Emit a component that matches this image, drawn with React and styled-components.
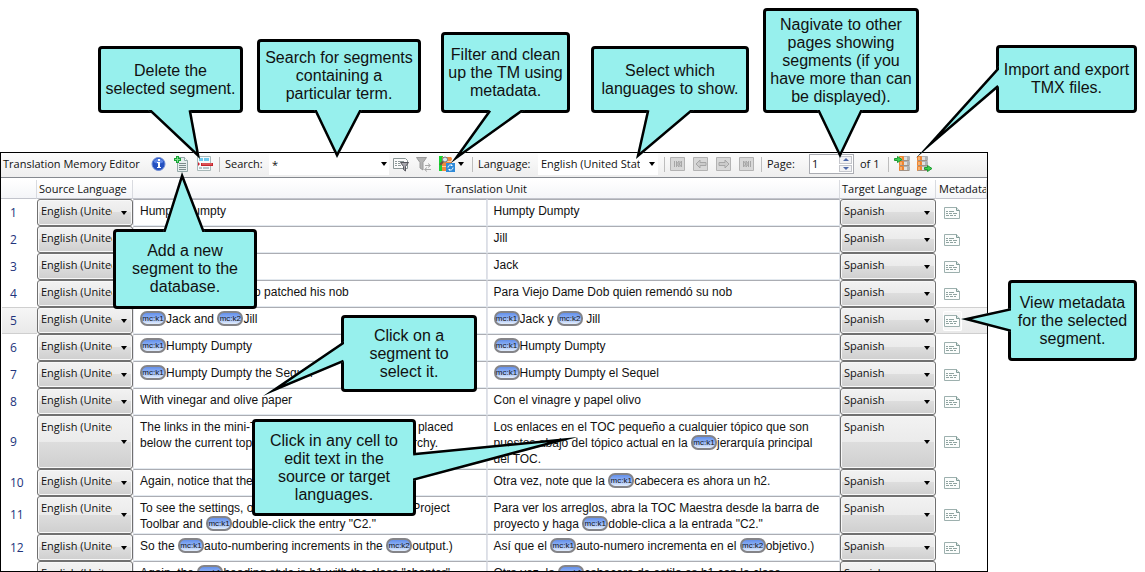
import React, { useId } from "react";
import styled, { createGlobalStyle, css } from "styled-components";

const uiFont = '"Open Sans", "Noto Sans", sans-serif';
const textFont = '"Liberation Sans", Arial, sans-serif';

const GlobalStyle = createGlobalStyle`
  *, *::before, *::after { box-sizing: border-box; }
  body { margin: 0; background: #fff; color: #111; font: 11px/16px ${uiFont}; }
  button, input, select { font: inherit; color: inherit; margin: 0; padding: 0; border: 0; background: none; border-radius: 0; }
`;

const Figure = styled.main`
  position: relative;
  display: flex;
  flex-direction: column;
  height: 100vh;
  padding: 152px 157px 0 0;
  overflow: hidden;
`;

const Editor = styled.section`
  flex: 1;
  min-height: 0;
  overflow: hidden;
  border: 1px solid #000;
  background: #fff;
`;

/* ---------- toolbar ---------- */

const Toolbar = styled.div`
  display: flex;
  align-items: center;
  height: 25px;
  padding: 0 0 2px 2px;
  border-bottom: 1px solid #85898f;
  background: linear-gradient(#fcfcfc, #eeeeee);
  white-space: nowrap;
`;

const Title = styled.h1`
  flex: 0 0 148px;
  margin: 0;
  font: inherit;
`;

const ToolLabel = styled.label`
  flex: 0 0 ${(p) => p.$width}px;
`;

const ToolGroup = styled.div`
  display: flex;
  align-items: center;
  gap: 7px;
  margin-left: ${(p) => p.$before || 0}px;
`;

const ToolButton = styled.button`
  display: block;
  width: 16px;
  height: 16px;
  svg { display: block; overflow: visible; }
`;

const ArrowButton = styled.button`
  display: grid;
  place-items: center;
  width: 11px;
  height: 22px;
`;

const Separator = styled.span`
  flex: none;
  width: 1px;
  height: 15px;
  margin: 0 5px 0 6px;
  background: #bdbdbd;
`;

const arrow = css`
  content: "";
  width: 0;
  height: 0;
  border: solid transparent;
  border-width: 4px 3px 0;
  border-top-color: #000;
`;

const Arrow = styled.span`
  display: block;
  ${arrow}
`;

const Combo = styled.div`
  display: flex;
  align-items: center;
  flex: none;
  width: 120px;
  height: 22px;
  padding-left: 3px;
  background: #fff;
`;

const ComboInput = styled.input`
  flex: 1;
  min-width: 0;
  height: 22px;
  outline: 0;
`;

const ComboSelect = styled.select`
  appearance: none;
  flex: 0 0 99px;
  width: 99px;
  height: 22px;
  margin-right: 6px;
  outline: 0;
  overflow: hidden;
`;

const Spinner = styled.div`
  display: flex;
  flex: none;
  width: 45px;
  height: 20px;
  padding: 1px;
  border: 1px solid #abadb3;
  background: #fff;
`;

const SpinnerInput = styled.input`
  flex: 1;
  min-width: 0;
  padding-left: 1px;
  outline: 0;
`;

const SpinnerButtons = styled.div`
  display: grid;
  gap: 1px;
  width: 13px;
`;

const SpinnerButton = styled.button`
  display: grid;
  place-items: center;
  border: 1px solid #c3c5cb;
  background: #f2f2f4;
  svg { display: block; }
`;

const PageCount = styled.span`
  flex: 0 0 22px;
  margin-left: 6px;
`;

/* ---------- segment table ---------- */

const Table = styled.table`
  display: block;
  padding-top: 2px;
  background: #fff;
`;

const Section = styled.thead`
  display: block;
`;

const Body = styled.tbody`
  display: block;
`;

const Row = styled.tr`
  display: grid;
  grid-template-columns: 36px 96px 1fr 1fr 96px 51px;
  min-height: ${(p) => (p.$head ? 19 : 27)}px;
`;

const Head = styled.th`
  grid-column: span ${(p) => p.$span || 1};
  padding: 1px 0 0 ${(p) => p.$indent || 0}px;
  border: solid #d9dbe0;
  border-width: 0 1px 1px 0;
  border-bottom-color: #c2c4cc;
  background: linear-gradient(#ffffff, #f4f5f8);
  overflow: hidden;
  font-weight: 400;
  text-align: ${(p) => (p.$span ? "center" : "left")};
  white-space: nowrap;
`;

const selectedFill = css`
  border: solid #cfcfcf;
  border-width: 1px 0;
  background: linear-gradient(#f6f6f6, #e9e9e9);
`;

const RowNumber = styled.th`
  display: flex;
  align-items: center;
  margin-left: 1px;
  padding: 0 0 0 8px;
  font-size: 12px;
  font-weight: 400;
  color: #22347c;
  ${(p) => p.$selected && selectedFill}
`;

const Cell = styled.td`
  display: grid;
  min-width: 0;
  padding: 0;
`;

const MetaCell = styled.td`
  display: flex;
  align-items: center;
  padding: 0 0 0 7px;
  ${(p) => p.$selected && selectedFill}
`;

const MetaButton = styled.button`
  width: 19px;
  height: 20px;
  padding: 0 1px;
  border-radius: 2px;
  ${(p) => p.$selected && css`background: #f6f6f6; box-shadow: inset 0 0 0 1px #fff;`}
  svg { display: block; }
`;

const LanguageBox = styled.label`
  display: flex;
  justify-content: space-between;
  align-items: flex-start;
  padding: 0 5px 0 3px;
  border: 1px solid #707070;
  border-radius: 3px;
  background: linear-gradient(#f2f2f2, #ebebeb 49%, #dddddd 50%, #cfcfcf);
  box-shadow: inset 0 0 0 1px #f8f8f8;
  &::after { ${arrow} align-self: center; }
`;

const LanguageSelect = styled.select`
  appearance: none;
  width: 71px;
  height: 22px;
  line-height: 16px;
  outline: 0;
`;

const Segment = styled.div`
  min-width: 0;
  padding: 3px 15px 1px 6px;
  border: 1px solid;
  border-color: #abadb3 #dbdfe6 #e3e9ef #e2e3ea;
  background: #fff;
  font: 12px/16px ${textFont};
  outline: 0;
`;

const Chip = styled.span`
  display: inline-block;
  width: 26px;
  height: 15px;
  border: 2px solid #848488;
  border-radius: 7px;
  background: linear-gradient(#6490ea, #8fb2f6 45%, #e4eefc);
  font-size: 8px;
  line-height: 11px;
  text-align: center;
  vertical-align: top;
`;

/* ---------- callouts ---------- */

const Note = styled.aside`
  position: absolute;
  left: ${(p) => p.$x}px;
  top: ${(p) => p.$y}px;
  width: ${(p) => p.$w}px;
  height: ${(p) => p.$h}px;
  display: grid;
  place-items: center;
  border: 3px solid #000;
  border-radius: 4px;
  background: #97f0ed;
  font: 16px/18px ${textFont};
  text-align: center;
  white-space: pre;
`;

const Tail = styled.svg`
  position: absolute;
  left: -3px;
  top: -3px;
  overflow: visible;
  pointer-events: none;
`;

function Callout({ x, y, w, h, tail, children }) {
  const id = useId();
  const d = "M" + tail.map(([px, py]) => `${px - x} ${py - y}`).join(" L");
  return (
    <Note $x={x} $y={y} $w={w} $h={h}>
      <Tail width="1" height="1" aria-hidden="true">
        <clipPath id={id}><path d={d + "Z"} /></clipPath>
        <g clipPath={`url(#${id})`}>
          <path d={d + "Z"} fill="#97f0ed" />
          <path d={d} fill="none" stroke="#000" strokeWidth="5" strokeMiterlimit="30" />
        </g>
      </Tail>
      {children}
    </Note>
  );
}

/* ---------- icons ---------- */

const Svg = (p) => <svg width="16" height="16" viewBox="0 0 16 16" aria-hidden="true" {...p} />;

const InfoIcon = () => (
  <Svg>
    <circle cx="7.500" cy="8" r="6.500" fill="#2450c0" stroke="#6f8cd4" />
    <path d="M2.500 6a5.500 5.500 0 0 1 10 0q-5 3-10 0" fill="#5d86e6" />
    <path d="M7 3h2v2H7zM6 6h3v5h1v1H6v-1h1V7H6z" fill="#fff" />
  </Svg>
);

const AddIcon = () => (
  <Svg>
    <path d="M3.500 1.500h7l3 3v11h-10z" fill="#e6eeee" stroke="#93a8a8" />
    <path d="M10.500 1.500v3h3" fill="#fff" stroke="#93a8a8" />
    <path d="M5 7.500h7M5 9.500h7M5 11.500h7M5 13.500h7" stroke="#7c8c8c" />
    <path d="M2 0h3v2h2v3H5v2H2V5H0V2h2z" fill="#18a436" />
    <path d="M3 1h1v2h2v1H4v2H3V4H1V3h2z" fill="#7ee08c" />
  </Svg>
);

const DeleteIcon = () => (
  <Svg>
    <path d="M.5.5h13v14H.5z" fill="#f6fafb" stroke="#a8b8b8" />
    <path d="M2 2h4v3H2zM7 2h5v3H7z" fill="#6fc9ee" />
    <path d="M2 11h3v2H2zM6 11h6v2H6z" fill="#b6c4ca" />
    <path d="M1 6l2 2-2 2z" fill="#c23" />
    <path d="M4 7h12v3H4z" fill="#c4242c" />
    <path d="M5 8h10" stroke="#f08080" />
  </Svg>
);

const FilterIcon = () => (
  <Svg>
    <path d="M.5 2.500h12l2 2v8H.5z" fill="#fbfbfb" stroke="#8a9696" />
    <path d="M2 5.500h2M5 5.500h6M2 7.500h2M5 7.500h2M2 9.500h2M5 9.500h3" stroke="#8d9999" />
    <path d="M7.500 6.500h8l-3 4v4.500l-2-1.500v-3z" fill="#a7a7ad" stroke="#55555c" />
  </Svg>
);

const ClearFilterIcon = () => (
  <Svg>
    <path d="M.5 1.500h10l-3.500 5v7.500l-3-2v-5.500z" fill="#b4b4b4" stroke="#9a9a9a" />
    <path d="M9 9.500h5M12 7.500l2.500 2-2.500 2M15 13.500H9M11 11.500l-2.500 2 2.500 2" fill="none" stroke="#a9a9a9" />
  </Svg>
);

const CleanIcon = () => (
  <Svg>
    <path d="M0 0h4v15H0z" fill="#18d232" />
    <path d="M3 1h9q2 2 0 4 2 2 0 5 1 2-1 5H3z" fill="#f08a3c" />
    <path d="M3 5.500h9M3 10.500h9" stroke="#fbd0a4" />
    <circle cx="6" cy="3.500" r="2.500" fill="#dce8f2" stroke="#6d7680" />
    <path d="M4 5.500L1 9" stroke="#6d5140" strokeWidth="2" />
    <path d="M7 7h9v9H7z" fill="#2f8ad8" />
    <path d="M9 11.500a2.500 2.500 0 0 1 4-2M14 11.500a2.500 2.500 0 0 1-4 2" fill="none" stroke="#fff" />
    <path d="M12 8l2 2h-2zM11 15l-2-2h2z" fill="#fff" />
  </Svg>
);

const navShapes = {
  First: "M4.500 5v6M6.500 5v6M6.500 8l2.500-3v6zM9 8l2.500-3v6z",
  Previous: "M3 8l4-4v2.500h6v3H7V12z",
  Next: "M13 8L9 4v2.500H3v3h6V12z",
  Last: "M11.500 5v6M9.500 5v6M9.500 8L7 5v6zM7 8L4.500 5v6z",
};

const NavIcon = ({ shape }) => (
  <Svg>
    <path d="M.5 1.500h14v13H.5z" fill="#d8d8d8" stroke="#b3b3b3" />
    <path d={navShapes[shape]} fill="#cbcbcb" stroke="#a6a6a6" />
  </Svg>
);

const DatabaseIcon = ({ out }) => {
  const x = out ? 0 : 5;
  return (
    <Svg>
      {[0, 5, 10].map((y) => (
        <g key={y}>
          <rect x={x} y={y} width="11" height="5" rx="1" fill="#aeb2b4" />
          <rect x={x} y={y} width="5" height="5" rx="1" fill="#ef8531" />
          <rect x={x + 1} y={y + 1} width="2" height="3" fill="#f9b06c" />
          <rect x={x + 5} y={y + 1} width="3" height="3" fill="#dfe1e2" />
          <path d={`M${x + 1} ${y + 4.5}h9`} stroke="#a09286" />
        </g>
      ))}
      <path
        d={out ? "M7.500 11.500h3v-2l4.500 3-4.500 3v-2h-3z" : "M.5 2.500h3v-2l4.500 3-4.500 3v-2h-3z"}
        fill="#3bd04c"
        stroke="#1f9a34"
      />
    </Svg>
  );
};

const MetadataIcon = () => (
  <svg width="17" height="12" viewBox="0 0 17 12" aria-hidden="true">
    <path d="M.5.5h12l3 3v8H.5z" fill="#fbfdfc" stroke="#9db0ae" />
    <path d="M12.500.5v3h3" fill="#dfe8e6" stroke="#7f9a96" />
    <path d="M2 4.500h2M5 4.500h5M2 6.500h2M5 6.500h3M9 6.500h4M2 8.500h3M6 8.500h3M10 8.500h2" stroke="#8fa3a0" />
  </svg>
);

const StepIcon = ({ up }) => (
  <svg width="6" height="3" viewBox="0 0 6 3" aria-hidden="true">
    <path d={up ? "M0 3l3-3 3 3z" : "M0 0l3 3 3-3z"} fill="#4a66a8" />
  </svg>
);

/* ---------- data ---------- */

const K1 = <Chip contentEditable={false} key="k1">mc:k1</Chip>;
const K2 = <Chip contentEditable={false} key="k2">mc:k2</Chip>;

const segments = [
  ["Humpty Dumpty", "Humpty Dumpty"],
  ["Jill", "Jill"],
  ["Jack", "Jack"],
  ["To Old Dame Dob who patched his nob", "Para Viejo Dame Dob quien remendó su nob"],
  [<>{K1}Jack and {K2}Jill</>, <>{K1}Jack y {K2} Jill</>],
  [<>{K1}Humpty Dumpty</>, <>{K1}Humpty Dumpty</>],
  [<>{K1}Humpty Dumpty the Sequel</>, <>{K1}Humpty Dumpty el Sequel</>],
  ["With vinegar and olive paper", "Con el vinagre y papel olivo"],
  [
    "The links in the mini-TOC to any other topic that are placed below the current topic within the master TOC hierarchy.",
    <>Los enlaces en el TOC pequeño a cualquier tópico que son puestos abajo del tópico actual en la {K1}jerarquía principal del TOC.</>,
  ],
  ["Again, notice that the heading is now an h2.", <>Otra vez, note que la {K1}cabecera es ahora un h2.</>],
  [
    <>To see the settings, open the Master TOC from the Project Toolbar and {K1}double-click the entry "C2."</>,
    <>Para ver los arreglos, abra la TOC Maestra desde la barra de proyecto y haga {K1}doble-clica a la entrada "C2."</>,
  ],
  [
    <>So the {K1}auto-numbering increments in the {K2}output.)</>,
    <>Así que el {K1}auto-numero incrementa en el {K2}objetivo.)</>,
  ],
  [
    <>Again, the {K1}heading style is h1 with the class "chapter"</>,
    <>Otra vez, la {K1}cabecera de estilo es h1 con la clase "chapter".</>,
  ],
];

const selectedRow = 5;

function Language({ label, value }) {
  return (
    <LanguageBox>
      <LanguageSelect aria-label={label} defaultValue={value}>
        <option>{value}</option>
      </LanguageSelect>
    </LanguageBox>
  );
}

const Editable = ({ label, children }) => (
  <Segment role="textbox" aria-label={label} contentEditable suppressContentEditableWarning spellCheck={false}>
    {children}
  </Segment>
);

const notes = [
  { x: 98, y: 46, w: 145, h: 67, tail: [[148, 110], [200, 159], [191, 110]], text: "Delete the\nselected segment." },
  { x: 257, y: 39, w: 164, h: 74, tail: [[314, 110], [337, 158], [362, 110]], text: "Search for segments\ncontaining a\nparticular term." },
  { x: 441, y: 32, w: 129, h: 81, tail: [[489, 110], [451, 163], [525, 110]], text: "Filter and clean\nup the TM using\nmetadata." },
  { x: 591, y: 46, w: 158, h: 67, tail: [[647, 110], [636, 159], [694, 110]], text: "Select which\nlanguages to show." },
  { x: 763, y: 8, w: 156, h: 105, tail: [[817, 110], [840, 158], [863, 110]], text: "Nagivate to other\npages showing\nsegments (if you\nhave more than can\nbe displayed)." },
  { x: 996, y: 45, w: 141, h: 68, tail: [[999, 66], [916, 158], [999, 87]], text: "Import and export\nTMX files." },
  { x: 113, y: 229, w: 144, h: 80, tail: [[163, 232], [182, 172], [205, 232]], text: "Add a new\nsegment to the\ndatabase." },
  { x: 341, y: 315, w: 136, h: 77, tail: [[344, 341], [263, 396], [344, 362]], text: "Click on a\nsegment to\nselect it." },
  { x: 252, y: 419, w: 164, h: 97, tail: [[413, 453], [578, 437], [413, 481]], text: "Click in any cell to\nedit text in the\nsource or target\nlanguages." },
  { x: 1008, y: 280, w: 129, h: 81, tail: [[1011, 308], [961, 319], [1011, 332]], text: "View metadata\nfor the selected\nsegment." },
];

export default function App() {
  return (
    <Figure>
      <GlobalStyle />
      <Editor>
        <Toolbar role="toolbar">
          <Title>Translation Memory Editor</Title>
          <ToolGroup>
            <ToolButton aria-label="Information"><InfoIcon /></ToolButton>
            <ToolButton aria-label="Add segment"><AddIcon /></ToolButton>
            <ToolButton aria-label="Delete segment"><DeleteIcon /></ToolButton>
          </ToolGroup>
          <Separator />
          <ToolLabel $width={44} htmlFor="search">Search:</ToolLabel>
          <Combo>
            <ComboInput id="search" defaultValue="*" />
            <ArrowButton aria-label="Recent searches"><Arrow /></ArrowButton>
          </Combo>
          <ToolGroup $before={4}>
            <ToolButton aria-label="Filter"><FilterIcon /></ToolButton>
            <ToolButton aria-label="Clear filter"><ClearFilterIcon /></ToolButton>
            <ToolButton aria-label="Clean up"><CleanIcon /></ToolButton>
          </ToolGroup>
          <ArrowButton aria-label="Clean up options"><Arrow /></ArrowButton>
          <Separator />
          <ToolLabel $width={60} htmlFor="language">Language:</ToolLabel>
          <Combo>
            <ComboSelect id="language" defaultValue="English (United States)">
              <option>English (United States)</option>
            </ComboSelect>
            <ArrowButton aria-label="Open languages"><Arrow /></ArrowButton>
          </Combo>
          <Separator />
          <ToolGroup>
            {Object.keys(navShapes).map((shape) => (
              <ToolButton key={shape} aria-label={`${shape} page`} disabled><NavIcon shape={shape} /></ToolButton>
            ))}
          </ToolGroup>
          <Separator />
          <ToolLabel $width={42} htmlFor="page">Page:</ToolLabel>
          <Spinner>
            <SpinnerInput id="page" defaultValue="1" />
            <SpinnerButtons>
              <SpinnerButton aria-label="Next page number"><StepIcon up /></SpinnerButton>
              <SpinnerButton aria-label="Previous page number"><StepIcon /></SpinnerButton>
            </SpinnerButtons>
          </Spinner>
          <PageCount>of 1</PageCount>
          <Separator />
          <ToolGroup>
            <ToolButton aria-label="Import TMX"><DatabaseIcon /></ToolButton>
            <ToolButton aria-label="Export TMX"><DatabaseIcon out /></ToolButton>
          </ToolGroup>
        </Toolbar>

        <Table>
          <Section>
            <Row $head>
              <Head aria-label="Number" />
              <Head $indent={2}>Source Language</Head>
              <Head $span={2}>Translation Unit</Head>
              <Head $indent={2}>Target Language</Head>
              <Head $indent={3}>Metadata</Head>
            </Row>
          </Section>
          <Body>
            {segments.map(([source, target], i) => {
              const n = i + 1;
              const selected = n === selectedRow;
              return (
                <Row key={n}>
                  <RowNumber scope="row" $selected={selected}>{n}</RowNumber>
                  <Cell><Language label={`Source language ${n}`} value="English (United States)" /></Cell>
                  <Cell><Editable label={`Source text ${n}`}>{source}</Editable></Cell>
                  <Cell><Editable label={`Target text ${n}`}>{target}</Editable></Cell>
                  <Cell><Language label={`Target language ${n}`} value="Spanish" /></Cell>
                  <MetaCell $selected={selected}>
                    <MetaButton $selected={selected} aria-label={`Metadata ${n}`}><MetadataIcon /></MetaButton>
                  </MetaCell>
                </Row>
              );
            })}
          </Body>
        </Table>
      </Editor>

      {notes.map(({ text, ...place }) => (
        <Callout key={text} {...place}>{text}</Callout>
      ))}
    </Figure>
  );
}
